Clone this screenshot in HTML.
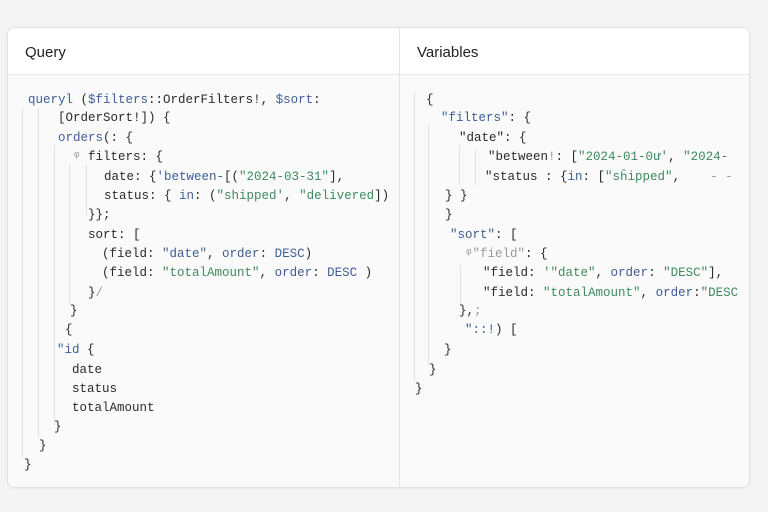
<!DOCTYPE html>
<html><head><meta charset="utf-8"><style>
body{margin:0;width:768px;height:512px;background:#f4f4f4;position:relative;overflow:hidden;font-family:"Liberation Sans",sans-serif}
.card{position:absolute;left:7px;top:27px;width:741px;height:459px;border:1px solid #e2e2e2;border-radius:7px;background:#fafafa;overflow:hidden;box-shadow:0 1px 3px rgba(0,0,0,.04)}
.hdr{position:absolute;left:0;top:0;width:741px;height:46px;background:#fff;border-bottom:1px solid #e6e6e6}
.div{position:absolute;left:391px;top:0;width:1px;height:459px;background:#e4e4e4}
.t{position:absolute;top:16px;font-size:15px;color:#222}
.l{position:absolute;font-family:"Liberation Mono",monospace;font-size:12.5px;color:#2a2a2a;white-space:pre;line-height:16px}
.b{color:#3d5f95}.g{color:#3e8a5d}.m{color:#999}
.v{position:absolute;width:1px;background:#e2e2e2}
</style></head><body>
<div class="card">
<div class="hdr"></div><div class="div"></div>
<div class="t" style="left:17px">Query</div>
<div class="t" style="left:409px">Variables</div>
</div>
<div class="v" style="left:22px;top:108px;height:350px"></div>
<div class="v" style="left:38px;top:108px;height:330px"></div>
<div class="v" style="left:54px;top:145px;height:280px"></div>
<div class="v" style="left:69px;top:165px;height:140px"></div>
<div class="v" style="left:86px;top:165px;height:50px"></div>
<div class="v" style="left:414px;top:92px;height:290px"></div>
<div class="v" style="left:428px;top:125px;height:240px"></div>
<div class="v" style="left:459px;top:145px;height:40px"></div>
<div class="v" style="left:475px;top:150px;height:35px"></div>
<div class="v" style="left:460px;top:265px;height:40px"></div>

<div class="l" style="left:28px;top:92px"><span class="b">queryl</span> (<span class="b">$filters</span>::OrderFilters!, <span class="b">$sort</span>:</div>
<div class="l" style="left:58px;top:110px">[OrderSort!]) {</div>
<div class="l" style="left:58px;top:130px"><span class="b">orders</span>(: {</div>
<div class="l" style="left:73px;top:149px"><span class="m">ᵠ</span> filters: {</div>
<div class="l" style="left:104px;top:169px">date: {<span class="b">'between-</span>[(<span class="g">"2024-03-31"</span>],</div>
<div class="l" style="left:104px;top:188px">status: { <span class="b">in</span>: (<span class="g">"shipped'</span>, <span class="g">"delivered</span>])</div>
<div class="l" style="left:88px;top:207px">}};</div>
<div class="l" style="left:88px;top:227px">sort: [</div>
<div class="l" style="left:102px;top:246px">(field: <span class="b">"date"</span>, <span class="b">order</span>: <span class="b">DESC</span>)</div>
<div class="l" style="left:102px;top:265px">(field: <span class="g">"totalAmount"</span>, <span class="b">order</span>: <span class="b">DESC</span> )</div>
<div class="l" style="left:88px;top:285px">}<span class="m">/</span></div>
<div class="l" style="left:70px;top:303px">}</div>
<div class="l" style="left:65px;top:322px">{</div>
<div class="l" style="left:57px;top:342px"><span class="b">"id</span> {</div>
<div class="l" style="left:72px;top:362px">date</div>
<div class="l" style="left:72px;top:381px">status</div>
<div class="l" style="left:72px;top:400px">totalAmount</div>
<div class="l" style="left:54px;top:419px">}</div>
<div class="l" style="left:39px;top:438px">}</div>
<div class="l" style="left:24px;top:457px">}</div>

<div class="l" style="left:426px;top:92px">{</div>
<div class="l" style="left:441px;top:110px"><span class="b">"filters"</span>: {</div>
<div class="l" style="left:459px;top:130px">"date": {</div>
<div class="l" style="left:488px;top:149px">"between<span class="m">!</span>: [<span class="g">"2024-01-0ư'</span>, <span class="g">"2024-</span></div>
<div class="l" style="left:485px;top:169px">"status : {<span class="b">in</span>: [<span class="g">"sĥipped"</span>,    <span class="m">- -</span></div>
<div class="l" style="left:445px;top:188px">} }</div>
<div class="l" style="left:445px;top:207px">}</div>
<div class="l" style="left:450px;top:227px"><span class="b">"sort"</span>: [</div>
<div class="l" style="left:465px;top:246px"><span class="m">ᵠ"field"</span>: {</div>
<div class="l" style="left:483px;top:265px">"field: <span class="g">'"date"</span>, <span class="b">order</span>: <span class="g">"DESC"</span>],</div>
<div class="l" style="left:483px;top:285px">"field: <span class="g">"totalAmount"</span>, <span class="b">order</span>:<span class="g">"DESC</span></div>
<div class="l" style="left:459px;top:303px">},<span class="m">;</span></div>
<div class="l" style="left:465px;top:322px"><span class="b">"::!</span>) [</div>
<div class="l" style="left:444px;top:342px">}</div>
<div class="l" style="left:429px;top:362px">}</div>
<div class="l" style="left:415px;top:381px">}</div>
</body></html>
